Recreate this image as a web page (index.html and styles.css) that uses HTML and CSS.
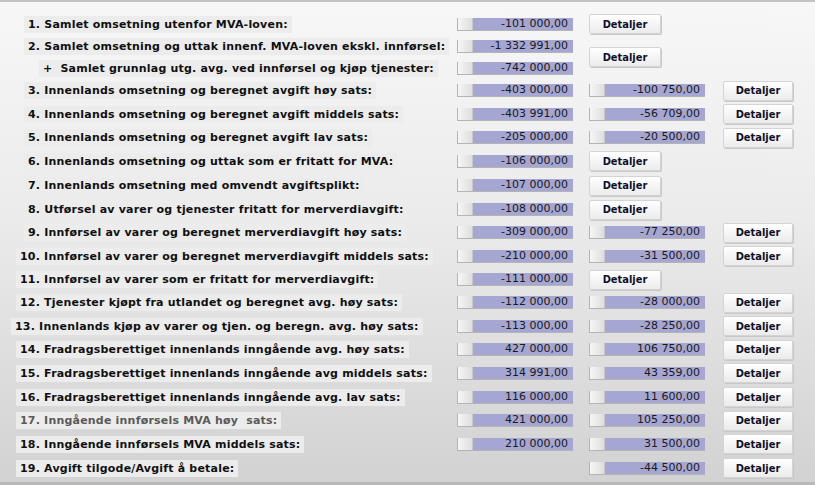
FILE: index.html
```html
<!DOCTYPE html>
<html lang="no">
<head>
<meta charset="utf-8">
<title>MVA-oppgave</title>
<link rel="stylesheet" href="styles.css">
</head>
<body>
<div class="panel">
  <div class="sheet">
    <div class="label l1">1. Samlet omsetning utenfor MVA-loven:</div>
    <div class="field f1"><span class="knob"></span><span class="val">-101 000,00</span></div>
    <button class="btn ba">Detaljer</button>

    <div class="label l1">2. Samlet omsetning og uttak innenf. MVA-loven ekskl. innførsel:</div>
    <div class="field f1"><span class="knob"></span><span class="val">-1 332 991,00</span></div>
    <button class="btn ba span2">Detaljer</button>

    <div class="label lplus">+&nbsp; Samlet grunnlag utg. avg. ved innførsel og kjøp tjenester:</div>
    <div class="field f1"><span class="knob"></span><span class="val">-742 000,00</span></div>

    <div class="label l1">3. Innenlands omsetning og beregnet avgift høy sats:</div>
    <div class="field f1"><span class="knob"></span><span class="val">-403 000,00</span></div>
    <div class="field f2"><span class="knob"></span><span class="val">-100 750,00</span></div>
    <button class="btn bb">Detaljer</button>

    <div class="label l1">4. Innenlands omsetning og beregnet avgift middels sats:</div>
    <div class="field f1"><span class="knob"></span><span class="val">-403 991,00</span></div>
    <div class="field f2"><span class="knob"></span><span class="val">-56 709,00</span></div>
    <button class="btn bb">Detaljer</button>

    <div class="label l1">5. Innenlands omsetning og beregnet avgift lav sats:</div>
    <div class="field f1"><span class="knob"></span><span class="val">-205 000,00</span></div>
    <div class="field f2"><span class="knob"></span><span class="val">-20 500,00</span></div>
    <button class="btn bb">Detaljer</button>

    <div class="label l1">6. Innenlands omsetning og uttak som er fritatt for MVA:</div>
    <div class="field f1"><span class="knob"></span><span class="val">-106 000,00</span></div>
    <button class="btn ba">Detaljer</button>

    <div class="label l1">7. Innenlands omsetning med omvendt avgiftsplikt:</div>
    <div class="field f1"><span class="knob"></span><span class="val">-107 000,00</span></div>
    <button class="btn ba">Detaljer</button>

    <div class="label l1">8. Utførsel av varer og tjenester fritatt for merverdiavgift:</div>
    <div class="field f1"><span class="knob"></span><span class="val">-108 000,00</span></div>
    <button class="btn ba">Detaljer</button>

    <div class="label l1">9. Innførsel av varer og beregnet merverdiavgift høy sats:</div>
    <div class="field f1"><span class="knob"></span><span class="val">-309 000,00</span></div>
    <div class="field f2"><span class="knob"></span><span class="val">-77 250,00</span></div>
    <button class="btn bb">Detaljer</button>

    <div class="label l2">10. Innførsel av varer og beregnet merverdiavgift middels sats:</div>
    <div class="field f1"><span class="knob"></span><span class="val">-210 000,00</span></div>
    <div class="field f2"><span class="knob"></span><span class="val">-31 500,00</span></div>
    <button class="btn bb">Detaljer</button>

    <div class="label l2">11. Innførsel av varer som er fritatt for merverdiavgift:</div>
    <div class="field f1"><span class="knob"></span><span class="val">-111 000,00</span></div>
    <button class="btn ba">Detaljer</button>

    <div class="label l2">12. Tjenester kjøpt fra utlandet og beregnet avg. høy sats:</div>
    <div class="field f1"><span class="knob"></span><span class="val">-112 000,00</span></div>
    <div class="field f2"><span class="knob"></span><span class="val">-28 000,00</span></div>
    <button class="btn bb">Detaljer</button>

    <div class="label l3">13. Innenlands kjøp av varer og tjen. og beregn. avg. høy sats:</div>
    <div class="field f1"><span class="knob"></span><span class="val">-113 000,00</span></div>
    <div class="field f2"><span class="knob"></span><span class="val">-28 250,00</span></div>
    <button class="btn bb">Detaljer</button>

    <div class="label l2">14. Fradragsberettiget innenlands inngående avg. høy sats:</div>
    <div class="field f1"><span class="knob"></span><span class="val">427 000,00</span></div>
    <div class="field f2"><span class="knob"></span><span class="val">106 750,00</span></div>
    <button class="btn bb">Detaljer</button>

    <div class="label l2">15. Fradragsberettiget innenlands inngående avg middels sats:</div>
    <div class="field f1"><span class="knob"></span><span class="val">314 991,00</span></div>
    <div class="field f2"><span class="knob"></span><span class="val">43 359,00</span></div>
    <button class="btn bb">Detaljer</button>

    <div class="label l2">16. Fradragsberettiget innenlands inngående avg. lav sats:</div>
    <div class="field f1"><span class="knob"></span><span class="val">116 000,00</span></div>
    <div class="field f2"><span class="knob"></span><span class="val">11 600,00</span></div>
    <button class="btn bb">Detaljer</button>

    <div class="label l2 dim">17. Inngående innførsels MVA høy&nbsp; sats:</div>
    <div class="field f1"><span class="knob"></span><span class="val">421 000,00</span></div>
    <div class="field f2"><span class="knob"></span><span class="val">105 250,00</span></div>
    <button class="btn bb">Detaljer</button>

    <div class="label l2">18. Inngående innførsels MVA middels sats:</div>
    <div class="field f1"><span class="knob"></span><span class="val">210 000,00</span></div>
    <div class="field f2"><span class="knob"></span><span class="val">31 500,00</span></div>
    <button class="btn bb">Detaljer</button>

    <div class="label l2">19. Avgift tilgode/Avgift å betale:</div>
    <div class="field f2"><span class="knob"></span><span class="val">-44 500,00</span></div>
    <button class="btn bb">Detaljer</button>
  </div>
</div>
</body>
</html>
```

FILE: styles.css
```css
html, body {
  margin: 0;
  padding: 0;
}

body {
  width: 815px;
  height: 485px;
  overflow: hidden;
  font-family: "DejaVu Sans", sans-serif;
}

.panel {
  height: 485px;
  box-sizing: border-box;
  border-top: 2px solid #c4c4c4;
  border-bottom: 3px solid #b9b9b9;
  background: linear-gradient(to bottom, #f7f7f7 0%, #ebebeb 45%, #d2d2d2 100%);
  padding-top: 11px;
}

.sheet {
  display: grid;
  grid-template-columns: 457px 132px 134px 92px;
  grid-template-rows: 22px 22px 22px 23px 24px 23px 24px 25px 23px 23px 24px 23px 23px 24px 23px 24px 24px 23px 24px 24px;
  align-items: center;
}

.label {
  grid-column: 1;
  justify-self: start;
  background: #ececec;
  color: #101010;
  font-family: "DejaVu Sans", sans-serif;
  font-weight: bold;
  font-size: 11px;
  letter-spacing: 0.2px;
  line-height: 13px;
  padding: 2px 4px;
  white-space: nowrap;
}

.l1 { margin-left: 24px; }
.l2 { margin-left: 16px; }
.l3 { margin-left: 11px; }
.lplus { margin-left: 39px; }
.dim { color: #5a5a5a; }

.field {
  display: flex;
  width: 116px;
  height: 13px;
  box-sizing: border-box;
  border-left: 1px solid #b4b4b4;
  border-bottom: 1px solid #b4b4b4;
  background: #a6a6d3;
}

.f1 { grid-column: 2; }
.f2 { grid-column: 3; }

.knob {
  flex: 0 0 15px;
  background: linear-gradient(to right, #f6f6f6, #dedede);
  border-right: 1px solid #c8c8c8;
  box-sizing: border-box;
}

.val {
  flex: 1;
  text-align: right;
  padding-right: 5px;
  font-family: "DejaVu Sans", sans-serif;
  font-size: 11px;
  line-height: 12px;
  color: #1a1a1a;
}

.btn {
  height: 20px;
  padding: 0;
  margin: 0;
  box-sizing: border-box;
  border: 1px solid #d4d4d4;
  border-radius: 2px;
  background: linear-gradient(to bottom, #ffffff, #ebebeb);
  box-shadow: 1px 1px 0 #c8c8c8;
  font-family: "DejaVu Sans Condensed", "DejaVu Sans", sans-serif;
  font-weight: bold;
  font-size: 11px;
  color: #10102a;
  justify-self: start;
}

.ba { grid-column: 3; width: 72px; }
.bb { grid-column: 4; width: 70px; }
.span2 { grid-row: span 2; }
```
